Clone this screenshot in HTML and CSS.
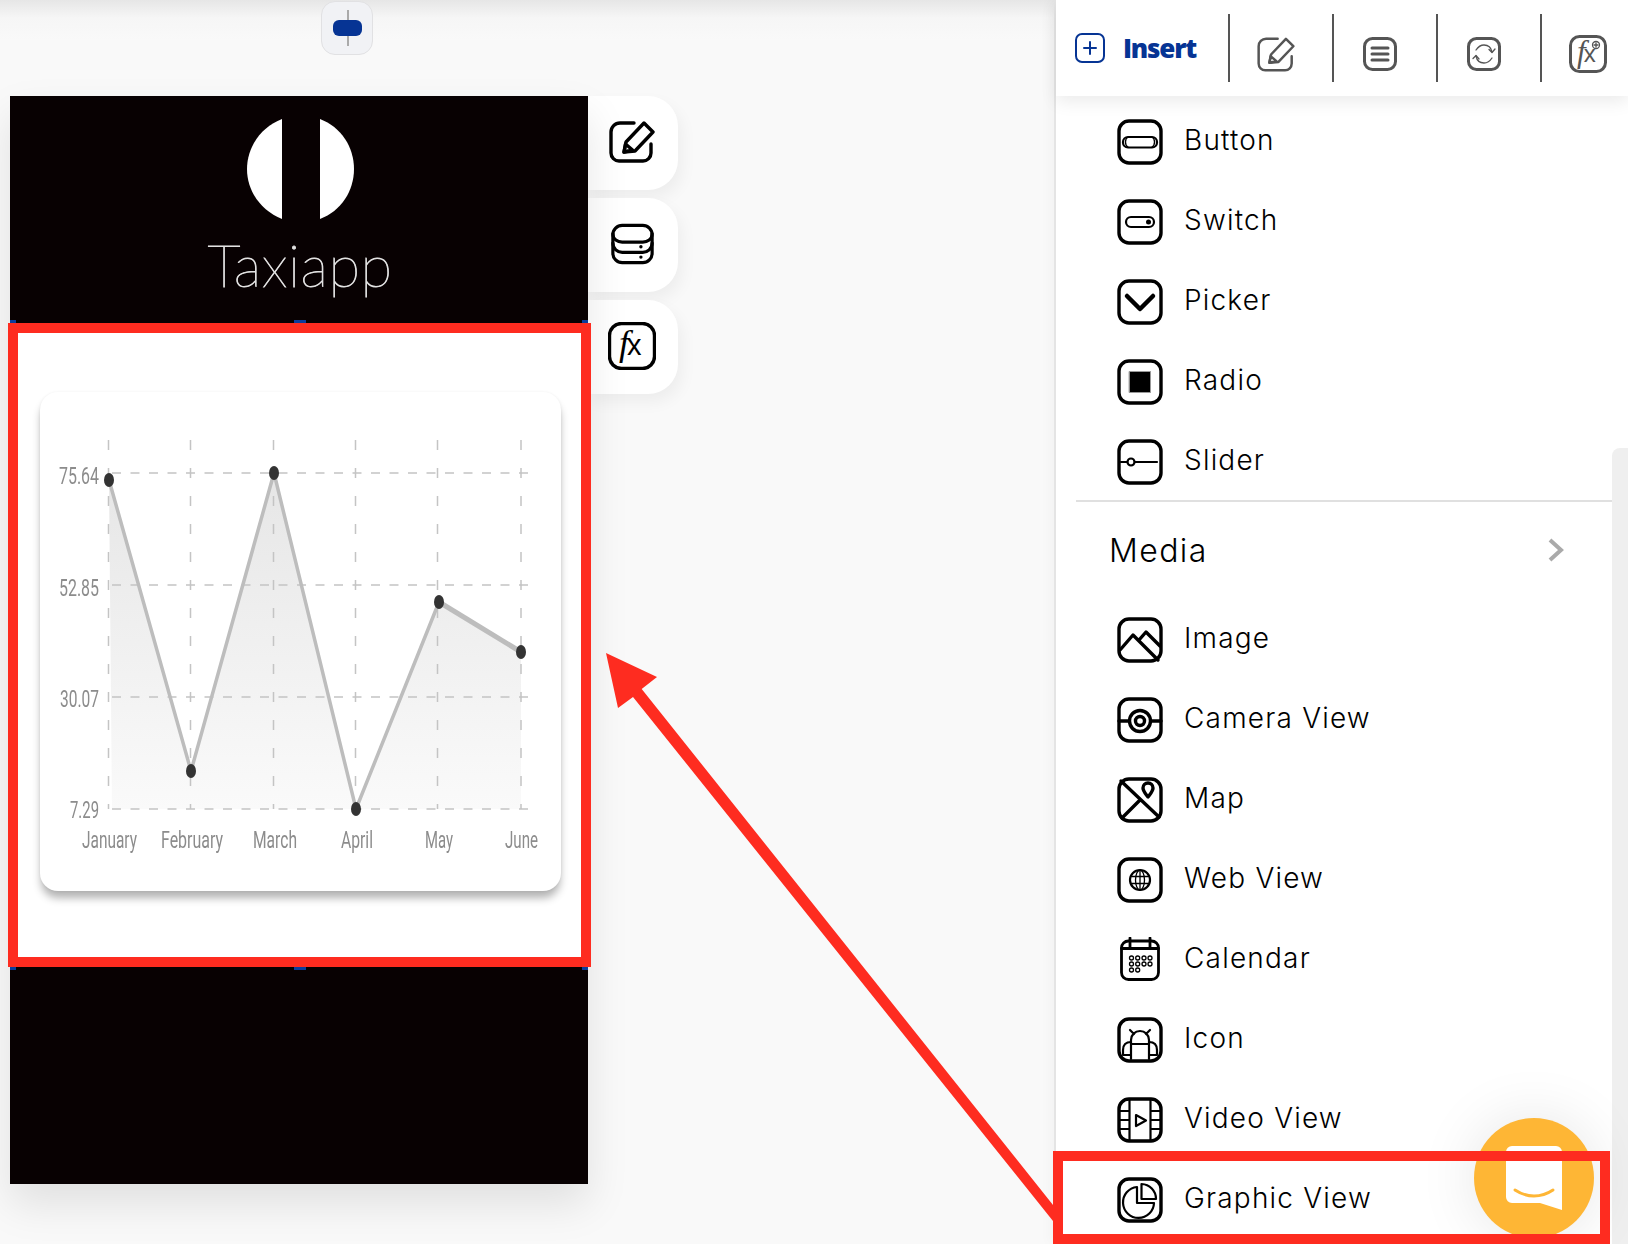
FILE: index.html
```html
<!DOCTYPE html>
<html lang="en">
<head>
  <meta charset="UTF-8" />
  <title>Insert Graphic View</title>
  <link rel="stylesheet" href="styles.css">
</head>
<body>
  <svg class="defs" width="0" height="0">
    <symbol id="edit" viewBox="0 0 46 42">
      <path d="M25 2H11a9 9 0 0 0-9 9v21a8 8 0 0 0 8 8h24a8 8 0 0 0 8-8V23" />
      <path d="M15 31l2-10L35 2l9 9-18 19z" />
      <path class="solid" d="M15 31l1.500-8 7 6z" />
    </symbol>
  </svg>

  <main class="canvas">
    <button class="align-btn"><span class="align-pill"></span></button>

    <div class="stage">
      <div class="phone">
        <div class="brand">
          <svg class="brand-logo" viewBox="0 0 107 100">
            <path d="M35 0C14 8 0 28 0 50s14 42 35 50z" />
            <path d="M73 0c21 8 34 28 34 50s-13 42-34 50z" />
          </svg>
          <div class="brand-name">Taxiapp</div>
        </div>

        <section class="selected">
          <i class="handle handle-tl"></i><i class="handle handle-tc"></i><i class="handle handle-tr"></i>
          <div class="chart-card">
            <svg class="chart" viewBox="40 392 521 499">
              <defs>
                <linearGradient id="area" x1="0" y1="0" x2="0" y2="1">
                  <stop offset="0" stop-color="#e6e6e6" />
                  <stop offset="1" stop-color="#fafafa" />
                </linearGradient>
              </defs>
              <polygon fill="url(#area)" points="109,480 191,771 274,473 356,809 439,602 521,652 521,809 112,809 109,480" />
              <g class="grid grid-h">
                <line x1="112" y1="473" x2="529" y2="473" />
                <line x1="112" y1="585" x2="529" y2="585" />
                <line x1="112" y1="697" x2="529" y2="697" />
                <line x1="112" y1="809" x2="529" y2="809" />
              </g>
              <g class="grid grid-v">
                <line x1="108.500" y1="440" x2="108.500" y2="809" />
                <line x1="190.500" y1="440" x2="190.500" y2="809" />
                <line x1="273.500" y1="440" x2="273.500" y2="809" />
                <line x1="355.500" y1="440" x2="355.500" y2="809" />
                <line x1="437.500" y1="440" x2="437.500" y2="809" />
                <line x1="521" y1="440" x2="521" y2="809" />
              </g>
              <polyline class="series" points="109,480 191,771 274,473 356,809 439,602" />
              <line class="series series-thick" x1="439" y1="602" x2="521" y2="652" />
              <g class="dots">
                <ellipse cx="109" cy="480" rx="5" ry="7" />
                <ellipse cx="191" cy="771" rx="5" ry="7" />
                <ellipse cx="274" cy="473" rx="5" ry="7" />
                <ellipse cx="356" cy="809" rx="5" ry="7" />
                <ellipse cx="439" cy="602" rx="5" ry="7" />
                <ellipse cx="521" cy="652" rx="5" ry="7" />
              </g>
              <g class="axis">
                <text x="59" y="484" textLength="40" lengthAdjust="spacingAndGlyphs">75.64</text>
                <text x="59" y="596" textLength="40" lengthAdjust="spacingAndGlyphs">52.85</text>
                <text x="60" y="707" textLength="39" lengthAdjust="spacingAndGlyphs">30.07</text>
                <text x="70" y="818" textLength="29" lengthAdjust="spacingAndGlyphs">7.29</text>
                <text x="82" y="848" textLength="55" lengthAdjust="spacingAndGlyphs">January</text>
                <text x="161" y="848" textLength="62" lengthAdjust="spacingAndGlyphs">February</text>
                <text x="253" y="848" textLength="44" lengthAdjust="spacingAndGlyphs">March</text>
                <text x="341" y="848" textLength="32" lengthAdjust="spacingAndGlyphs">April</text>
                <text x="425" y="848" textLength="28" lengthAdjust="spacingAndGlyphs">May</text>
                <text x="505" y="848" textLength="33" lengthAdjust="spacingAndGlyphs">June</text>
              </g>
            </svg>
          </div>
          <i class="handle handle-bl"></i><i class="handle handle-bc"></i><i class="handle handle-br"></i>
        </section>
      </div>

      <div class="side-tools">
        <div class="side-tool"><svg class="ic" width="46" height="42"><use href="#edit" /></svg></div>
        <div class="side-tool">
          <svg class="ic ic-db" width="43" height="42" viewBox="0 0 46 44">
            <rect x="2" y="2" width="42" height="40" rx="10" />
            <path d="M2 11c0 6 5 9 10 9h22c5 0 10-3 10-9" />
            <path d="M2 21c0 6 5 10 10 10h22c5 0 10-4 10-10" />
            <circle class="solid" cx="32" cy="25" r="1.800" />
            <circle class="solid" cx="32" cy="36" r="1.800" />
          </svg>
        </div>
        <div class="side-tool side-tool-fx">
          <svg class="ic ic-fx" width="48" height="48" viewBox="0 0 48 48">
            <rect x="1.500" y="1.500" width="45" height="45" rx="12" />
            <text x="11" y="33"><tspan class="fx-f">f</tspan><tspan class="fx-x" dx="-2">x</tspan></text>
          </svg>
        </div>
      </div>
    </div>
  </main>

  <aside class="panel">
    <header class="toolbar">
      <div class="insert">
        <svg class="insert-icon" width="30" height="30" viewBox="0 0 30 30">
          <rect x="1" y="1" width="28" height="28" rx="6" />
          <path d="M15 9v12M9 15h12" />
        </svg>
        <span>Insert</span>
      </div>
      <div class="tool">
        <svg class="ic ic-gray" width="38" height="35"><use href="#edit" /></svg>
      </div>
      <div class="tool tool-wide">
        <svg class="ic ic-gray" width="34" height="34" viewBox="0 0 34 34">
          <rect x="1.500" y="1.500" width="31" height="31" rx="8" />
          <path d="M9 11h16M9 17h16M9 23h16" />
        </svg>
      </div>
      <div class="tool tool-wide">
        <svg class="ic ic-gray" width="34" height="34" viewBox="0 0 34 34">
          <rect x="1.500" y="1.500" width="31" height="31" rx="8" />
          <path class="hair" d="M9 13c2-3 5-5 8-5 4 0 7 2 8 7M25 21c-2 3-5 5-8 5-4 0-7-2-8-7" />
          <path class="hair" d="M22 12.500l3 3 3-3.500M6 21.500l3-3 3 3.500" />
        </svg>
      </div>
      <div class="tool tool-last">
        <svg class="ic ic-gray ic-fx ic-fx-small" width="38" height="38" viewBox="0 0 38 38">
          <rect x="1.500" y="1.500" width="35" height="35" rx="9" />
          <text x="8" y="27"><tspan class="fx-f">f</tspan><tspan class="fx-x" dx="-2">x</tspan></text>
          <circle class="hair" cx="27" cy="10" r="3.500" />
          <path class="hair" d="M27 8v4M25 10h4" />
        </svg>
      </div>
    </header>

    <ul class="items items-first">
      <li class="item">
        <svg class="ic" viewBox="0 0 46 46">
          <rect x="2" y="2" width="42" height="42" rx="10" />
          <rect class="thin" x="6" y="18" width="34" height="10.500" rx="5" />
          <path class="hair" d="M11 18c-2 1-2.500 3-2.500 5s.5 4 2.500 5M35 18c2 1 2.500 3 2.500 5s-.5 4-2.500 5" />
        </svg>
        <span>Button</span>
      </li>
      <li class="item">
        <svg class="ic" viewBox="0 0 46 46">
          <rect x="2" y="2" width="42" height="42" rx="10" />
          <rect class="thin" x="9" y="18" width="28" height="10" rx="5" />
          <circle class="solid" cx="31.500" cy="23" r="2.500" />
        </svg>
        <span>Switch</span>
      </li>
      <li class="item">
        <svg class="ic" viewBox="0 0 46 46">
          <rect x="2" y="2" width="42" height="42" rx="10" />
          <path class="heavy" d="M10 17l13 13 13-13" />
        </svg>
        <span>Picker</span>
      </li>
      <li class="item">
        <svg class="ic" viewBox="0 0 46 46">
          <rect x="2" y="2" width="42" height="42" rx="10" />
          <rect class="radio-dot" x="12.500" y="12.500" width="21" height="21" />
        </svg>
        <span>Radio</span>
      </li>
      <li class="item">
        <svg class="ic" viewBox="0 0 46 46">
          <rect x="2" y="2" width="42" height="42" rx="10" />
          <circle class="thin" cx="14" cy="23" r="3.500" />
          <path class="thin" d="M4 23h6M18 23h22" />
        </svg>
        <span>Slider</span>
      </li>
    </ul>

    <div class="group-rule"></div>
    <div class="group-head">
      <span>Media</span>
      <svg class="chevron" width="16" height="24" viewBox="0 0 16 24"><path d="M2 2l11 10L2 22" /></svg>
    </div>

    <ul class="items">
      <li class="item">
        <svg class="ic" viewBox="0 0 46 46">
          <rect x="2" y="2" width="42" height="42" rx="10" />
          <path d="M3 33l13-15 25 25M22 23l7-8 14 14" />
        </svg>
        <span>Image</span>
      </li>
      <li class="item">
        <svg class="ic" viewBox="0 0 46 46">
          <rect x="2" y="2" width="42" height="42" rx="10" />
          <circle cx="23" cy="24" r="10.500" />
          <circle cx="23" cy="24" r="4.500" />
          <path d="M2 24h10M34 24h10" />
        </svg>
        <span>Camera View</span>
      </li>
      <li class="item">
        <svg class="ic" viewBox="0 0 46 46">
          <rect x="2" y="2" width="42" height="42" rx="10" />
          <path d="M4 4l38 36M5 41l18-18" />
          <path d="M31 20c-3-4-5-6-5-9a5 5 0 0 1 10 0c0 3-2 5-5 9z" />
        </svg>
        <span>Map</span>
      </li>
      <li class="item">
        <svg class="ic" viewBox="0 0 46 46">
          <rect x="2" y="2" width="42" height="42" rx="10" />
          <circle class="thin" cx="23" cy="23" r="10" />
          <ellipse class="hair" cx="23" cy="23" rx="4.500" ry="10" />
          <path class="hair" d="M23 13v20M13.500 19.500h19M13.500 26.500h19" />
        </svg>
        <span>Web View</span>
      </li>
      <li class="item">
        <svg class="ic" viewBox="0 0 46 46">
          <rect class="thin-frame" x="4.500" y="4" width="37" height="38.500" rx="7" />
          <path class="thin-frame" d="M4.500 11.500h37M13 1v9M33 1v9" />
          <g class="hair">
            <circle cx="14.500" cy="21" r="2" /><circle cx="20.700" cy="21" r="2" /><circle cx="27" cy="21" r="2" /><circle cx="33" cy="21" r="2" />
            <circle cx="14.500" cy="27" r="2" /><circle cx="20.700" cy="27" r="2" /><circle cx="27" cy="27" r="2" /><circle cx="33" cy="27" r="2" />
            <circle cx="14.500" cy="33" r="2" /><circle cx="20.700" cy="33" r="2" />
          </g>
        </svg>
        <span>Calendar</span>
      </li>
      <li class="item">
        <svg class="ic" viewBox="0 0 46 46">
          <rect x="2" y="2" width="42" height="42" rx="10" />
          <path class="thin" d="M14 27v-4c0-5 4-9 9-9s9 4 9 9v4M14 27h18v15M14 27v15M13 13l4 4M33 13l-4 4" />
          <path class="thin" d="M14 25c-5 0-8 3-8 8v5h8M32 25c5 0 8 3 8 8v5h-8" />
        </svg>
        <span>Icon</span>
      </li>
      <li class="item">
        <svg class="ic" viewBox="0 0 46 46">
          <rect x="2" y="2" width="42" height="42" rx="10" />
          <path class="thin" d="M12.500 2v42M33.500 2v42M2 14h10M2 23h10M2 32h10M34 14h10M34 23h10M34 32h10" />
          <path class="thin" d="M19 18l10 5.500-10 5.500z" />
        </svg>
        <span>Video View</span>
      </li>
      <li class="item">
        <svg class="ic" viewBox="0 0 46 46">
          <rect x="2" y="2" width="42" height="42" rx="10" />
          <path class="thin" d="M20 10a15.500 15.500 0 1 0 17 16H20z" />
          <path class="thin" d="M24.500 7a15 15 0 0 1 14.500 15H24.500z" />
        </svg>
        <span>Graphic View</span>
      </li>
    </ul>

    <div class="scroll-track"></div>
  </aside>

  <div class="chat-bubble">
    <svg width="56" height="64" viewBox="0 0 56 64">
      <path class="chat-shape" d="M6 0h44a6 6 0 0 1 6 6v58l-22-7H6a6 6 0 0 1-6-6V6a6 6 0 0 1 6-6z" />
      <path class="chat-smile" d="M9 44c12 8 26 8 38 0" />
    </svg>
  </div>

  <div class="callout callout-chart"></div>
  <div class="callout callout-item"></div>
  <svg class="arrow" width="1628" height="1244" viewBox="0 0 1628 1244">
    <polygon points="606,653 657,677 641.700,689 1053,1205 1053,1221 633,697 618,708" />
  </svg>
</body>
</html>
```

FILE: styles.css
```css
* {
  box-sizing: border-box;
}
html, body {
  margin: 0;
  height: 1244px;
  overflow: hidden;
}
body {
  position: relative;
  display: flex;
  width: 1628px;
  background: #f9f9f9;
  font-family: Inter, "Liberation Sans", sans-serif;
  color: #000;
}
.defs {
  position: absolute;
}

/* canvas side */
.canvas {
  width: 1054px;
  flex-shrink: 0;
  background: linear-gradient(#e6e6e6, #f6f6f6 18px, #f9f9f9 40px);
}
.align-btn {
  display: flex;
  align-items: center;
  justify-content: center;
  width: 52px;
  height: 54px;
  margin: 1px 0 0 321px;
  padding: 0;
  background: #f1f2f5;
  border: 1px solid #e1e1e3;
  border-radius: 14px;
  position: relative;
}
.align-btn::before {
  content: "";
  position: absolute;
  left: 25px;
  top: 8px;
  bottom: 8px;
  width: 2px;
  background: #aaa;
}
.align-pill {
  position: relative;
  width: 29px;
  height: 16px;
  border-radius: 6px;
  background: #063494;
}
.stage {
  display: flex;
  margin: 41px 0 0 10px;
}
.phone {
  position: relative;
  width: 578px;
  height: 1088px;
  background: #080102;
  box-shadow: 0 20px 40px rgba(0, 0, 0, 0.1);
}
.brand {
  height: 227px;
  padding-top: 23px;
  display: flex;
  flex-direction: column;
  align-items: center;
}
.brand-logo {
  width: 107px;
  height: 100px;
  margin-left: 3px;
  fill: #fff;
}
.brand-name {
  margin: 13px 0 0 2px;
  font-family: Lato, sans-serif;
  font-weight: 100;
  font-size: 58px;
  letter-spacing: 0.5px;
  line-height: 66px;
  color: #e2e2e2;
  -webkit-text-stroke: 0.8px #e2e2e2;
}
.selected {
  position: relative;
  height: 644px;
  padding: 69px 27px 0 30px;
  background: #fff;
}
.handle {
  position: absolute;
  height: 3px;
  background: #0b3c9c;
}
.handle-tl, .handle-bl { left: 0; width: 6px; }
.handle-tc, .handle-bc { left: 284px; width: 12px; }
.handle-tr, .handle-br { right: 0; width: 6px; }
.handle-tl, .handle-tc, .handle-tr { top: -3px; }
.handle-bl, .handle-bc, .handle-br { bottom: -3px; }
.chart-card {
  width: 521px;
  height: 499px;
  background: #fff;
  border-radius: 18px;
  box-shadow: 0 8px 9px -1px rgba(0, 0, 0, 0.3), 0 0 3px rgba(0, 0, 0, 0.06);
}
.chart {
  display: block;
  width: 521px;
  height: 499px;
  filter: blur(0.7px);
}
.grid line {
  stroke: #c4c4c4;
  stroke-width: 1.5;
}
.grid-h line {
  stroke-dasharray: 9 9.500;
}
.grid-v line {
  stroke-dasharray: 10 18;
}
.series {
  fill: none;
  stroke: #bdbdbd;
  stroke-width: 3.500;
}
.series-thick {
  stroke-width: 5;
}
.dots {
  fill: #333;
}
.axis text {
  font-family: Roboto, sans-serif;
  font-weight: 400;
  font-size: 23px;
  fill: #8c8c8c;
}
.side-tools {
  display: flex;
  flex-direction: column;
  gap: 8px;
}
.side-tool {
  display: flex;
  align-items: center;
  justify-content: center;
  width: 90px;
  height: 94px;
  padding: 0 2px 3px 0;
  background: #fff;
  border-radius: 0 30px 30px 0;
  box-shadow: 4px 8px 16px rgba(0, 0, 0, 0.05);
}

/* icons */
.ic {
  display: block;
  flex-shrink: 0;
  fill: none;
  stroke: #000;
  stroke-width: 3.400;
  stroke-linecap: round;
  stroke-linejoin: round;
}
.ic .solid {
  fill: #000;
  stroke: none;
}
.ic .thin {
  stroke-width: 2.200;
}
.ic .hair {
  stroke-width: 1.300;
}
.ic .heavy {
  stroke-width: 4.500;
}
.ic .thin-frame {
  stroke-width: 2.800;
}
.ic .radio-dot {
  fill: #000;
  stroke: #999;
  stroke-width: 1;
}
.ic-gray {
  stroke-width: 3;
}
.ic-fx text {
  fill: #000;
  stroke: none;
}
.fx-f {
  font-family: "Liberation Serif", serif;
  font-style: italic;
  font-size: 36px;
}
.fx-x {
  font-family: "Liberation Sans", sans-serif;
  font-size: 29px;
}
.ic-fx-small text {
  fill: #555;
}
.ic-fx-small .fx-f {
  font-size: 31px;
}
.ic-fx-small .fx-x {
  font-size: 24px;
}
.ic-gray {
  stroke: #555;
}
.ic-gray .solid {
  fill: #555;
}

/* panel */
.panel {
  position: relative;
  width: 574px;
  height: 1244px;
  flex-shrink: 0;
  background: #fff;
  border-left: 2px solid #e4e4e4;
  box-shadow: -4px 0 12px rgba(0, 0, 0, 0.03);
}
.toolbar {
  position: relative;
  z-index: 1;
  display: flex;
  align-items: center;
  height: 96px;
  background: #fff;
  box-shadow: 0 6px 16px rgba(0, 0, 0, 0.08);
}
.insert {
  display: flex;
  align-items: center;
  gap: 18px;
  width: 172px;
  padding-left: 19px;
  font-family: "Open Sans", sans-serif;
  font-weight: 800;
  font-size: 26px;
  color: #063494;
}
.insert span {
  letter-spacing: -1.2px;
}
.insert-icon {
  fill: none;
  stroke: #063494;
  stroke-width: 2;
  stroke-linecap: round;
}
.tool {
  display: flex;
  width: 104px;
  height: 68px;
  padding: 23px 0 0 27px;
  border-left: 2px solid #555;
}
.tool-wide {
  padding-left: 29px;
}
.tool-last {
  width: 88px;
  padding: 21px 0 0 27px;
}
.items {
  display: flex;
  flex-direction: column;
  gap: 34px;
  margin: 0;
  padding: 0 0 0 61px;
  list-style: none;
}
.items-first {
  padding-top: 23px;
}
.item {
  display: flex;
  align-items: center;
  gap: 21px;
  height: 46px;
  font-size: 28px;
  font-weight: 350;
  letter-spacing: 1.2px;
}
.item .ic {
  width: 46px;
  height: 46px;
}
.item span {
  padding-bottom: 5px;
}
.group-rule {
  height: 2px;
  margin: 15px 0 0 20px;
  background: #e0e0e0;
}
.group-head {
  display: flex;
  align-items: center;
  justify-content: space-between;
  height: 96px;
  margin-bottom: 19px;
  padding: 0 64px 0 53px;
  font-size: 32px;
  font-weight: 350;
  letter-spacing: 1.400px;
}
.chevron {
  fill: none;
  stroke: #aaa;
  stroke-width: 4;
}
.scroll-track {
  position: absolute;
  right: 0;
  top: 448px;
  bottom: 0;
  width: 16px;
  background: #efefef;
  border-top-left-radius: 8px;
}

/* chat widget */
.chat-bubble {
  position: absolute;
  left: 1474px;
  top: 1118px;
  width: 120px;
  height: 120px;
  padding: 28px 0 0 32px;
  border-radius: 50%;
  background: #feb635;
  box-shadow: 0 0 60px rgba(0, 0, 0, 0.1);
}
.chat-shape {
  fill: #fff;
}
.chat-smile {
  fill: none;
  stroke: #feb635;
  stroke-width: 3;
  stroke-linecap: round;
}

/* red annotations */
.callout {
  position: absolute;
  border: 10px solid #fe2c20;
}
.callout-chart {
  left: 8px;
  top: 323px;
  width: 583px;
  height: 644px;
}
.callout-item {
  left: 1053px;
  top: 1151px;
  width: 557px;
  height: 93px;
}
.arrow {
  position: absolute;
  left: 0;
  top: 0;
  fill: #fe2c20;
}
```
